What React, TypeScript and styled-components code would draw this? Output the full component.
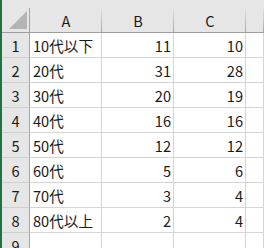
import { Fragment } from "react";
import styled, { createGlobalStyle } from "styled-components";

const GlobalStyle = createGlobalStyle`
  html, body {
    margin: 0;
    padding: 0;
    background: #ffffff;
  }
  body {
    font-family: "Noto Sans CJK JP", "Noto Sans", sans-serif;
  }
`;

const rows: [string, number, number][] = [
  ["10代以下", 11, 10],
  ["20代", 31, 28],
  ["30代", 20, 19],
  ["40代", 16, 16],
  ["50代", 12, 12],
  ["60代", 5, 6],
  ["70代", 3, 4],
  ["80代以上", 2, 4],
];

const Window = styled.div`
  display: flex;
  width: 264px;
  height: 248px;
  overflow: hidden;
`;

const GreenEdge = styled.div`
  width: 2px;
  flex: none;
  background: #217346;
`;

const Sheet = styled.div`
  flex: 1;
  display: grid;
  grid-template-columns: 28px 72px 72px 72px 1fr;
  grid-template-rows: 33px repeat(9, 25px);
  font-size: 14.6px;
  color: #1a1a1a;
`;

const HeaderCell = styled.div`
  position: relative;
  background: #e6e6e6;
  border-bottom: 1px solid #9e9e9e;
  display: flex;
  align-items: center;
  justify-content: center;
  padding-top: 8px;
  box-sizing: border-box;

  &::after {
    content: "";
    position: absolute;
    right: 0;
    top: 8px;
    bottom: 0;
    width: 1px;
    background: linear-gradient(#e0e0e0, #a8a8a8);
  }
`;

const Corner = styled(HeaderCell)`
  &::after {
    top: 8px;
    background: #a4a4a4;
  }
`;

const Triangle = styled.div`
  position: absolute;
  right: 3px;
  bottom: 3px;
  width: 0;
  height: 0;
  border-left: 18px solid transparent;
  border-bottom: 18px solid #b4b4b4;
`;

const RowHead = styled.div`
  background: #e6e6e6;
  border-right: 1px solid #a4a4a4;
  border-bottom: 1px solid #d0d0d0;
  display: flex;
  align-items: center;
  justify-content: center;
`;

const Cell = styled.div<{ $num?: boolean }>`
  border-right: 1px solid #d4d4d4;
  border-bottom: 1px solid #d4d4d4;
  display: flex;
  align-items: center;
  justify-content: ${(p) => (p.$num ? "flex-end" : "flex-start")};
  padding: 0 2px 0 3px;
  white-space: nowrap;
  overflow: hidden;
`;

export default function App() {
  return (
    <>
      <GlobalStyle />
      <Window>
        <GreenEdge />
        <Sheet>
          <Corner>
            <Triangle />
          </Corner>
          <HeaderCell>A</HeaderCell>
          <HeaderCell>B</HeaderCell>
          <HeaderCell>C</HeaderCell>
          <HeaderCell />
          {rows.map(([label, b, c], i) => (
            <Fragment key={i}>
              <RowHead>{i + 1}</RowHead>
              <Cell>{label}</Cell>
              <Cell $num>{b}</Cell>
              <Cell $num>{c}</Cell>
              <Cell />
            </Fragment>
          ))}
          <RowHead>9</RowHead>
          <Cell />
          <Cell />
          <Cell />
          <Cell />
        </Sheet>
      </Window>
    </>
  );
}
